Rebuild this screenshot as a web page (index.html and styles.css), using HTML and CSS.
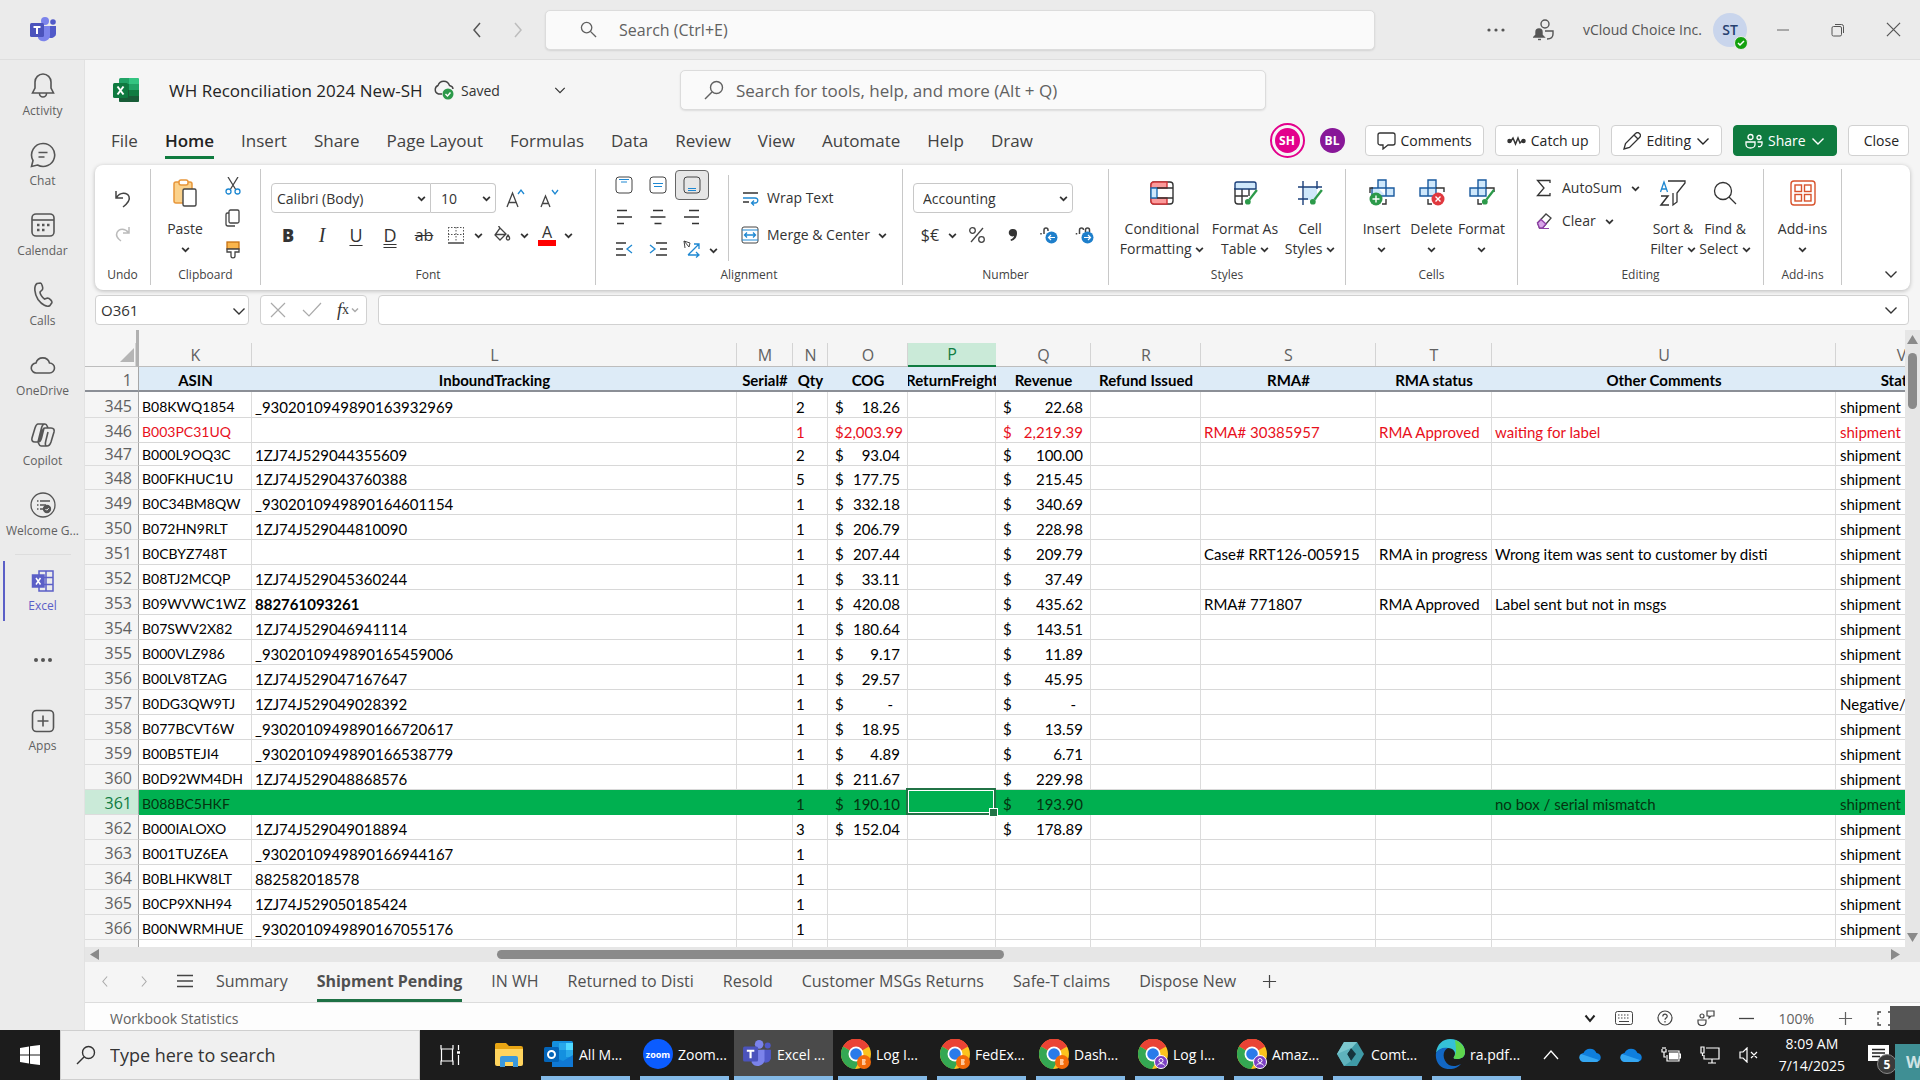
FILE: index.html
```html
<!DOCTYPE html>
<html lang="en">
<head>
<meta charset="utf-8">
<title>WH Reconciliation 2024 New-SH</title>
<link rel="stylesheet" href="styles.css">
</head>
<body>
<svg class="defs" aria-hidden="true">
  <symbol id="caret" viewBox="0 0 8 8"><path d="M1 2.5 4 5.5 7 2.5" fill="none" stroke="currentColor" stroke-width="1.5"/></symbol>
  <symbol id="chev" viewBox="0 0 14 14"><path d="M1.500 4.500 7 10 12.500 4.500" fill="none" stroke="currentColor" stroke-width="1.400"/></symbol>
  <symbol id="left" viewBox="0 0 14 18"><path d="M10 2 4 9 10 16" fill="none" stroke="currentColor" stroke-width="1.500"/></symbol>
  <symbol id="right" viewBox="0 0 14 18"><path d="M4 2 10 9 4 16" fill="none" stroke="currentColor" stroke-width="1.500"/></symbol>
  <symbol id="x" viewBox="0 0 16 16"><path d="M1 1 15 15M15 1 1 15" fill="none" stroke="currentColor" stroke-width="1.300"/></symbol>
  <symbol id="mag" viewBox="0 0 18 18"><circle cx="7" cy="7" r="5.500" fill="none" stroke="currentColor" stroke-width="1.400"/><path d="M11 11 17 17" stroke="currentColor" stroke-width="1.400"/></symbol>
  <symbol id="magl" viewBox="0 0 20 20"><circle cx="12.500" cy="7.500" r="6" fill="none" stroke="currentColor" stroke-width="1.400"/><path d="M8 12 1 19" stroke="currentColor" stroke-width="1.400"/></symbol>
  <symbol id="plus" viewBox="0 0 16 16"><path d="M8 1V15M1 8H15" stroke="currentColor" stroke-width="1.300"/></symbol>
  <symbol id="chrome" viewBox="0 0 30 30"><circle cx="15" cy="15" r="15" fill="#fcc31e"/><path d="M15 15 2 7.500A15 15 0 0 1 28 7.500Z" fill="#ea4335"/><path d="M15 15 2 7.500A15 15 0 0 0 14 30L21 18Z" fill="#34a853"/><path d="M2 7.500A15 15 0 0 1 28 7.500H15Z" fill="#ea4335"/><circle cx="15" cy="15" r="7.500" fill="#fff"/><circle cx="15" cy="15" r="5.800" fill="#2a7bea"/></symbol>
  <symbol id="orange" viewBox="0 0 14 14"><circle cx="7" cy="7" r="7" fill="#f26a0a"/><path d="M5 4h3l1 1-1 2 1 2-1 1H5Z" fill="#ffc79a"/></symbol>
  <symbol id="person" viewBox="0 0 14 14"><circle cx="7" cy="7" r="6.500" fill="#7b3fc4" stroke="#fff"/><circle cx="7" cy="5.500" r="2" fill="none" stroke="#fff"/><path d="M3.500 10.500C4 8 10 8 10.500 10.500" fill="none" stroke="#fff"/></symbol>
  <symbol id="teams" viewBox="0 0 28 28"><circle cx="16" cy="5" r="4" fill="#7b83eb"/><circle cx="24" cy="6" r="2.800" fill="#5059c9"/><path d="M19 10h8v8a5 5 0 0 1-8 3Z" fill="#5059c9"/><path d="M9 10h12v10a6.500 6.500 0 0 1-12 2Z" fill="#7b83eb"/><rect x="1" y="7" width="14" height="14" rx="1.500" fill="#4b53bc"/><path d="M4.500 11h7M8 11v7" stroke="#fff" stroke-width="2"/></symbol>
  <symbol id="brush" viewBox="0 0 14 16"><path d="M13 1 6 10" stroke="#2c9a4a" stroke-width="2.200"/><circle cx="4.500" cy="12" r="2.700" fill="#2c9a4a"/></symbol>
  <symbol id="cloud" viewBox="0 0 22 16"><path d="M5 15a4.500 4.500 0 0 1-.5-8.900A7 7 0 0 1 17.500 6 4.500 4.500 0 0 1 17 15Z" fill="#0f7fdd"/><path d="M5 15a4.500 4.500 0 0 1-3-8L20 13a4 4 0 0 1-3 2Z" fill="#35a7f2"/></symbol>
</svg>

<div class="window">
<header class="titlebar">
  <div class="brand"><svg width="28" height="28"><use href="#teams"/></svg></div>
  <nav class="history">
    <button aria-label="Back"><svg width="14" height="18"><use href="#left"/></svg></button>
    <button class="dim" aria-label="Forward"><svg width="14" height="18"><use href="#right"/></svg></button>
  </nav>
  <label class="search main-search"><svg width="17" height="17"><use href="#mag"/></svg><input type="text" placeholder="Search (Ctrl+E)" aria-label="Search"></label>
  <div class="account">
    <button aria-label="More"><svg width="18" height="4" viewBox="0 0 18 4"><g fill="#555"><circle cx="2" cy="2" r="1.600"/><circle cx="9" cy="2" r="1.600"/><circle cx="16" cy="2" r="1.600"/></g></svg></button>
    <button aria-label="Presence"><svg width="22" height="22" viewBox="0 0 22 22" fill="none" stroke="#555" stroke-width="1.400"><circle cx="12" cy="5" r="4"/><path d="M12 12h8v3c0 3-2 5-6 5"/><path d="M1 18h10l-2-2v-3a3 3 0 0 0-6 0v3Z" fill="#555"/><path d="M5 20.500h3"/></svg></button>
    <span class="org">vCloud Choice Inc.</span>
    <span class="avatar">ST<svg class="presence" width="14" height="14" viewBox="0 0 14 14"><circle cx="7" cy="7" r="6.500" fill="#13a10e" stroke="#ebebeb"/><path d="M4 7l2 2 4-4" fill="none" stroke="#fff" stroke-width="1.500"/></svg></span>
  </div>
  <div class="winctl">
    <button aria-label="Minimize"><svg width="14" height="14" viewBox="0 0 14 14"><path d="M1 7h12" stroke="#666"/></svg></button>
    <button aria-label="Restore"><svg width="14" height="14" viewBox="0 0 14 14" fill="none" stroke="#555"><rect x="1" y="3.500" width="9.500" height="9.500" rx="1.500"/><path d="M4 1.500h6.500a2 2 0 0 1 2 2V10"/></svg></button>
    <button aria-label="Close window"><svg width="15" height="15"><use href="#x"/></svg></button>
  </div>
</header>

<div class="body">
<nav class="rail">
  <a href="#"><svg width="26" height="26" viewBox="0 0 26 26" fill="none" stroke="#555" stroke-width="1.600"><path d="M13 2a8 8 0 0 0-8 8v6l-2.500 5h21L21 16v-6a8 8 0 0 0-8-8ZM9.500 21.500a3.500 3.500 0 0 0 7 0"/></svg>Activity</a>
  <a href="#"><svg width="26" height="26" viewBox="0 0 26 26" fill="none" stroke="#555" stroke-width="1.600"><path d="M13 1.500A11.500 11.500 0 1 1 7.500 23L1.500 24.500 3 18.500A11.500 11.500 0 0 1 13 1.500ZM8.500 10.500h9M8.500 15h6"/></svg>Chat</a>
  <a href="#"><svg width="26" height="26" viewBox="0 0 26 26" fill="none" stroke="#555" stroke-width="1.600"><rect x="2" y="2" width="22" height="22" rx="4"/><path d="M2 8h22"/><path d="M7 13h2.500M12 13h2.500M17 13h2.500M7 18h2.500M12 18h2.500" stroke-width="2.500"/></svg>Calendar</a>
  <a href="#"><svg width="26" height="26" viewBox="0 0 26 26" fill="none" stroke="#555" stroke-width="1.600"><path d="M7 1.500 10.500 1c1 0 3 5 2 6.500L10 10c0 2 2 5.500 4.500 7l3-1c2 0 5 3.500 4.500 4.500l-2 3c-3 2-8-.5-12-6C4.500 12 3.500 4 7 1.500Z"/></svg>Calls</a>
  <a href="#"><svg width="26" height="26" viewBox="0 0 26 26" fill="none" stroke="#555" stroke-width="1.600"><path d="M6.500 21a5 5 0 0 1-.5-10A7 7 0 0 1 19.500 11a5 5 0 0 1 0 10Z"/></svg>OneDrive</a>
  <a href="#"><svg width="26" height="26" viewBox="0 0 26 26" fill="none" stroke="#555" stroke-width="1.600"><path d="M8 2h7c2 0 2 2 3 4h3c3 0 3.500 2 3 4l-3 10c-1 3-2 4-4 4h-6c-2 0-2-2-3-4H5c-3 0-3.500-2-3-4L5 6c1-3 1.500-4 3-4ZM15 2c-2 0-3 2-3.500 4L8 20M18 6h-3c-2 0-2.500 2-3 4L9 20M8 20c2 0 3-2 3.500-4L14 6M17 24c-2 0-2-2-1-6l2-8"/></svg>Copilot</a>
  <a href="#"><svg width="26" height="26" viewBox="0 0 26 26" fill="none" stroke="#555" stroke-width="1.300"><circle cx="13" cy="13" r="12"/><path d="M10 9h10M10 13h6M10 17h3M7 9h1.500M7 13h1.500M7 17h1.500"/><circle cx="17" cy="17" r="3.500" fill="#555"/><path d="m15.500 17 1.200 1.200 2-2" stroke="#fff" stroke-width="1"/></svg>Welcome G...</a>
  <hr>
  <a href="#" class="current"><svg width="24" height="24" viewBox="0 0 24 24" fill="none" stroke="#5b5fc7" stroke-width="1.500"><path d="M8 2h14v20H8ZM15 2v20M8 8.500h14M8 15.500h14"/><rect x="1.500" y="6" width="11.500" height="12" fill="#5b5fc7"/><path d="m5 9 4.500 6.500M9.500 9 5 15.500" stroke="#fff"/></svg>Excel</a>
  <a href="#" class="more" aria-label="More apps"><svg width="20" height="6" viewBox="0 0 20 6" fill="#555"><circle cx="3" cy="3" r="2"/><circle cx="10" cy="3" r="2"/><circle cx="17" cy="3" r="2"/></svg></a>
  <a href="#"><svg width="24" height="24" viewBox="0 0 24 24" fill="none" stroke="#555" stroke-width="1.600"><rect x="1.500" y="1.500" width="21" height="21" rx="4"/><path d="M12 6.500v11M6.500 12h11"/></svg>Apps</a>
</nav>

<main class="app">
  <div class="docbar">
    <svg class="xl" width="26" height="24" viewBox="0 0 26 24"><rect x="6" y="0" width="20" height="24" rx="1.500" fill="#21a366"/><path d="M16 0h8.500A1.500 1.500 0 0 1 26 1.500V6H16Z" fill="#33c481"/><path d="M6 6h10v6H6Z" fill="#107c41"/><path d="M6 12h20v10.500a1.500 1.500 0 0 1-1.500 1.500h-17A1.500 1.500 0 0 1 6 22.500Z" fill="#185c37"/><path d="M16 12h10v6H16Z" fill="#107c41"/><rect x="0" y="5" width="15" height="15" rx="1.500" fill="#0f7a40"/><path d="m4.500 8.500 6 8M10.500 8.500l-6 8" stroke="#fff" stroke-width="2"/></svg>
    <h1>WH Reconciliation 2024 New-SH</h1>
    <svg class="saved-ic" width="22" height="20" viewBox="0 0 22 20"><path d="M9 14H5.500a4.500 4.500 0 0 1-.5-8.500 6 6 0 0 1 11.500 0c2 .5 3.500 1.500 3.500 3.500" fill="none" stroke="#444" stroke-width="1.400"/><circle cx="15" cy="14" r="5.500" fill="#2c9a4a"/><path d="m12.500 14 2 2 3-3.500" fill="none" stroke="#fff" stroke-width="1.400"/></svg>
    <span class="saved">Saved</span>
    <button class="doc-menu" aria-label="File menu"><svg width="12" height="12"><use href="#chev"/></svg></button>
    <label class="search tool-search"><svg width="20" height="20"><use href="#magl"/></svg><input type="text" placeholder="Search for tools, help, and more (Alt + Q)" aria-label="Search for tools"></label>
  </div>

  <div class="menubar">
    <nav class="menus">
      <a href="#">File</a><a href="#" class="on">Home</a><a href="#">Insert</a><a href="#">Share</a><a href="#">Page Layout</a><a href="#">Formulas</a><a href="#">Data</a><a href="#">Review</a><a href="#">View</a><a href="#">Automate</a><a href="#">Help</a><a href="#">Draw</a>
    </nav>
    <div class="people"><span class="face pink">SH</span><span class="face purple">BL</span></div>
    <div class="actions">
      <button><svg width="19" height="18" viewBox="0 0 19 18" fill="none" stroke="#333" stroke-width="1.300"><path d="M3 1h13a2 2 0 0 1 2 2v8a2 2 0 0 1-2 2h-5l-5 4v-4H3a2 2 0 0 1-2-2V3a2 2 0 0 1 2-2Z"/></svg>Comments</button>
      <button><svg width="19" height="12" viewBox="0 0 19 12" fill="none" stroke="#333" stroke-width="1.500"><path d="M2 6h2l2-3 2.500 6L11 3l2 5 2-2h2"/><circle cx="2.500" cy="6" r="1.500" fill="#333"/><circle cx="16.500" cy="6" r="1.500" fill="#333"/></svg>Catch up</button>
      <button><svg width="18" height="18" viewBox="0 0 18 18" fill="none" stroke="#333" stroke-width="1.300"><path d="M1 17 2.500 11.500 12.500 1.500a2.500 2.500 0 0 1 4 4L6.500 15.500ZM11 3l4 4"/></svg>Editing<svg width="14" height="14"><use href="#chev"/></svg></button>
      <button class="share"><svg width="18" height="16" viewBox="0 0 18 16" fill="none" stroke="#fff" stroke-width="1.300"><circle cx="5.500" cy="4" r="2.500"/><circle cx="14" cy="4.500" r="2"/><path d="M1 9h9v2.500c0 2-2 3.500-4.500 3.500S1 13.500 1 11.500ZM12.500 9H17v2c0 2-2 3-4 2.500"/></svg>Share<svg width="14" height="14"><use href="#chev"/></svg></button>
      <button class="close">Close</button>
    </div>
  </div>

  <section class="ribbon">
    <div class="group g-undo"><div class="gbody stack">
      <button aria-label="Undo"><svg width="18" height="20" viewBox="0 0 18 20" fill="none" stroke="#444" stroke-width="1.500"><path d="M2 2v7h7M2.500 8.500C6 3 13 3 15 7.500c1.500 4-1.500 7-6 10.500"/></svg></button>
      <button aria-label="Redo"><svg width="18" height="20" viewBox="0 0 18 20" fill="none" stroke="#bbb" stroke-width="1.500"><path d="M15 3v6H9M14.500 8.500C11 4 5 4 3 8.500c-1.500 3.500.5 6 4 8.500"/></svg></button>
    </div><span class="glabel">Undo</span></div>

    <div class="group g-clip"><div class="gbody">
      <button class="big paste"><svg width="28" height="28" viewBox="0 0 28 28"><path d="M5 3h14a2 2 0 0 1 2 2v19H5a2 2 0 0 1-2-2V5a2 2 0 0 1 2-2Z" fill="#fbd28c" stroke="#e8963a" stroke-width="1.500"/><rect x="8" y="1" width="9" height="5" rx="2" fill="#fff" stroke="#e8963a" stroke-width="1.500"/><rect x="12" y="10" width="13" height="17" rx="1.500" fill="#fff" stroke="#444" stroke-width="1.400"/></svg>Paste<svg width="9" height="9"><use href="#caret"/></svg></button>
      <div class="minis">
        <button aria-label="Cut"><svg width="18" height="18" viewBox="0 0 18 18" fill="none" stroke-width="1.300"><path d="M4 0 12 13M14 0 6 13" stroke="#444"/><circle cx="4.500" cy="14.500" r="2.500" stroke="#1e88d2"/><circle cx="13.500" cy="14.500" r="2.500" stroke="#1e88d2"/></svg></button>
        <button aria-label="Copy"><svg width="18" height="18" viewBox="0 0 18 18" fill="none" stroke="#444" stroke-width="1.300"><rect x="5" y="1" width="10" height="13" rx="1.500"/><path d="M5 4H3.500A1.500 1.500 0 0 0 2 5.500V15a2 2 0 0 0 2 2h7"/></svg></button>
        <button aria-label="Format painter"><svg width="18" height="18" viewBox="0 0 18 18"><rect x="3" y="1" width="12" height="7" fill="#f9b54c" stroke="#c77213" stroke-width="1.300"/><path d="M3 8h12v3h-4v4c0 2.500-4 2.500-4 0v-4H3Z" fill="#fff" stroke="#444" stroke-width="1.300"/></svg></button>
      </div>
    </div><span class="glabel">Clipboard</span></div>

    <div class="group g-font"><div class="gbody rows">
      <div class="row">
        <span class="combo c-font"><select aria-label="Font"><option>Calibri (Body)</option></select><svg width="9" height="9"><use href="#caret"/></svg></span><span class="combo c-size"><select aria-label="Font size"><option>10</option></select><svg width="9" height="9"><use href="#caret"/></svg></span>
        <button class="grow" aria-label="Increase font size"><svg width="20" height="20" viewBox="0 0 20 20" fill="none" stroke="#444" stroke-width="1.300"><path d="M1 19 6.500 5 12 19M3 14.500h7"/><path d="M12 6l3-4 3 4" stroke="#1e88d2"/></svg></button>
        <button class="grow" aria-label="Decrease font size"><svg width="20" height="20" viewBox="0 0 20 20" fill="none" stroke="#444" stroke-width="1.300"><path d="M1 19 5.500 8 10 19M3 15.500h5"/><path d="M12 2l3 4 3-4" stroke="#1e88d2"/></svg></button>
      </div>
      <div class="row fmt">
        <button class="b">B</button><button class="i">I</button><button class="u">U</button><button class="d">D</button><button class="s">ab</button>
        <button aria-label="Borders"><svg width="18" height="18" viewBox="0 0 18 18"><path d="M1 1.500h16M1.500 1v14M16.500 1v14M9 1v14M1 8.500h16" stroke="#555" stroke-dasharray="1.500 1.500"/><path d="M1 17h16" stroke="#444" stroke-width="1.500"/></svg></button><svg class="dd" width="9" height="9"><use href="#caret"/></svg>
        <button aria-label="Fill colour"><svg width="18" height="18" viewBox="0 0 18 18" fill="none" stroke="#444" stroke-width="1.300"><path d="M7 2 13 8 7 14 2 9ZM7 2 5.500 0M2.500 8.500h10"/><path d="M15 9c3 4 1 5 0 5s-3-1 0-5Z"/></svg></button><svg class="dd" width="9" height="9"><use href="#caret"/></svg>
        <button class="a">A</button><svg class="dd" width="9" height="9"><use href="#caret"/></svg>
      </div>
    </div><span class="glabel">Font</span></div>

    <div class="group g-align"><div class="gbody">
      <div class="agrid">
        <button aria-label="Top align"><svg width="18" height="18" viewBox="0 0 18 18" fill="none"><rect x="1" y="1" width="16" height="16" rx="3" stroke="#444"/><path d="M4 3.500h10M6 6h6" stroke="#1e88d2"/></svg></button>
        <button aria-label="Middle align"><svg width="18" height="18" viewBox="0 0 18 18" fill="none"><rect x="1" y="1" width="16" height="16" rx="3" stroke="#444"/><path d="M4 7.500h10M5 10.500h8" stroke="#1e88d2"/></svg></button>
        <button class="pressed" aria-label="Bottom align"><svg width="18" height="18" viewBox="0 0 18 18" fill="none"><rect x="1" y="1" width="16" height="16" rx="3" stroke="#444"/><path d="M5 12.500h8M5 14.500h8" stroke="#1e88d2"/></svg></button>
        <button aria-label="Align left"><svg width="18" height="18" viewBox="0 0 18 18"><path d="M2 2.500h10M2 9h15M2 15.500h7" stroke="#333" stroke-width="1.300"/></svg></button>
        <button aria-label="Centre"><svg width="18" height="18" viewBox="0 0 18 18"><path d="M4 2.500h10M1.500 9h15M5.500 15.500h7" stroke="#333" stroke-width="1.300"/></svg></button>
        <button aria-label="Align right"><svg width="18" height="18" viewBox="0 0 18 18"><path d="M6 2.500h10M1 9h15M9 15.500h7" stroke="#333" stroke-width="1.300"/></svg></button>
        <button aria-label="Decrease indent"><svg width="18" height="18" viewBox="0 0 18 18" fill="none"><path d="M1 3h10M1 9h7M1 15h10" stroke="#333" stroke-width="1.300"/><path d="M17 5l-5 4 5 4" stroke="#1e88d2" stroke-width="1.300"/></svg></button>
        <button aria-label="Increase indent"><svg width="18" height="18" viewBox="0 0 18 18" fill="none"><path d="M7 3h11M11 9h7M7 15h11" stroke="#333" stroke-width="1.300"/><path d="M1 5l5 4-5 4" stroke="#1e88d2" stroke-width="1.300"/></svg></button>
        <button class="orient" aria-label="Orientation"><svg width="18" height="18" viewBox="0 0 18 18" fill="none"><path d="M1 1l5 6 1-4ZM1 1l1 7" stroke="#444"/><path d="M5 15 16 4M11 4h5v5M5 15h11M13 12l3 3-3 2.500" stroke="#1e88d2" stroke-width="1.300"/></svg></button>
      </div>
      <svg class="orient-dd" width="9" height="9"><use href="#caret"/></svg>
      <div class="arows">
        <button><svg width="18" height="18" viewBox="0 0 18 18" fill="none"><path d="M2 4h15M2 13h6" stroke="#333" stroke-width="1.300"/><path d="M2 9h12c4 0 3.500 5 0 5h-3M13 11.500 10.500 14l2.500 2.500" stroke="#1e88d2" stroke-width="1.300"/></svg>Wrap Text</button>
        <button><svg width="18" height="18" viewBox="0 0 18 18" fill="none"><rect x="1" y="1" width="16" height="16" rx="2" stroke="#444"/><path d="M1 4h16M1 14h16" stroke="#1e88d2"/><path d="M4 9h10M6 6.500 3.500 9 6 11.500M12 6.500 14.500 9 12 11.500" stroke="#1e88d2" stroke-width="1.300"/></svg>Merge &amp; Center<svg width="9" height="9"><use href="#caret"/></svg></button>
      </div>
    </div><span class="glabel">Alignment</span></div>

    <div class="group g-num"><div class="gbody rows">
      <div class="row"><span class="combo c-num"><select aria-label="Number format"><option>Accounting</option></select><svg width="9" height="9"><use href="#caret"/></svg></span></div>
      <div class="row nums">
        <button class="cur">$€</button><svg class="dd" width="9" height="9"><use href="#caret"/></svg>
        <button aria-label="Percent"><svg width="18" height="18" viewBox="0 0 18 18" fill="none" stroke="#444" stroke-width="1.300"><circle cx="4.500" cy="4.500" r="2.800"/><circle cx="13.500" cy="13.500" r="2.800"/><path d="M15 2 3 16"/></svg></button>
        <button aria-label="Comma style"><svg width="18" height="18" viewBox="0 0 18 18"><path d="M9 3a4 4 0 0 1 4 4c0 4-2 7-6 8l-.5-1.500C9 12.500 10 11 10 10a3.700 3.700 0 1 1-1-7Z" fill="#333"/></svg></button>
        <button aria-label="Decrease decimal"><svg width="20" height="18" viewBox="0 0 20 18" fill="none"><path d="M2 7v1.500M5 8V4a2 2 0 0 1 4 0v1" stroke="#444" stroke-width="1.500"/><circle cx="12.500" cy="11.500" r="6" fill="#1e7fcb"/><path d="M16 11.500H9.500M12 9l-2.500 2.500L12 14" stroke="#fff" stroke-width="1.200"/></svg></button>
        <button aria-label="Increase decimal"><svg width="20" height="18" viewBox="0 0 20 18" fill="none"><path d="M1.500 7v1.500M4.500 8V4a2 2 0 0 1 4 0M10.500 6V4a2 2 0 0 1 4 0v2" stroke="#444" stroke-width="1.500"/><circle cx="12.500" cy="11.500" r="6" fill="#1e7fcb"/><path d="M9 11.500h6.500M13 9l2.500 2.500L13 14" stroke="#fff" stroke-width="1.200"/></svg></button>
      </div>
    </div><span class="glabel">Number</span></div>

    <div class="group g-style"><div class="gbody bigs">
      <button class="big w90"><svg width="28" height="28" viewBox="0 0 28 28"><rect x="3" y="3" width="22" height="22" rx="3" fill="#fff" stroke="#333" stroke-width="1.400"/><path d="M6 3h13v6H3V6a3 3 0 0 1 3-3ZM3 19h16v6H6a3 3 0 0 1-3-3Z" fill="#fb9a9a" stroke="#d13438" stroke-width="1.400"/><path d="M3 9h6v10H3Z" fill="#cfe8fb" stroke="#1e6fb5" stroke-width="1.400"/><path d="M19 9h6M19 19h6M9 9h10M9 19h10" stroke="#333" stroke-width="1.400"/></svg><span>Conditional</span><span>Formatting <svg width="9" height="9"><use href="#caret"/></svg></span></button>
      <button class="big w72"><svg width="28" height="28" viewBox="0 0 28 28"><path d="M4 9v13a3 3 0 0 0 3 3h5M4 17h13M11 9v16M18 9v8" fill="none" stroke="#333" stroke-width="1.400"/><path d="M6 3h17a2 2 0 0 1 2 2v5H4V5a2 2 0 0 1 2-2Z" fill="#cfe8fb" stroke="#1a3f7a" stroke-width="1.400"/><use href="#brush" x="12" y="10" width="15" height="17"/></svg><span>Format As</span><span>Table <svg width="9" height="9"><use href="#caret"/></svg></span></button>
      <button class="big w54"><svg width="28" height="28" viewBox="0 0 28 28"><path d="M8 8h13v13H8Z" fill="#cfe8fb"/><path d="M2 8h24M2 20h10M7 2v24M21 2v8" stroke="#1a3f7a" stroke-width="1.400"/><use href="#brush" x="12" y="10" width="15" height="17"/></svg><span>Cell</span><span>Styles <svg width="9" height="9"><use href="#caret"/></svg></span></button>
    </div><span class="glabel">Styles</span></div>

    <div class="group g-cells"><div class="gbody bigs">
      <button class="big w50"><svg width="28" height="28" viewBox="0 0 28 28"><path d="M10 1h8v8h8v8h-8v-8h-8Z M10 9H4v8h14" fill="#cfe8fb" stroke="#1a5a9e" stroke-width="1.400"/><path d="M18 20v5h-4M2 14V9h3" fill="none" stroke="#333" stroke-width="1.400"/><circle cx="8" cy="20" r="6.500" fill="#2c9a4a"/><path d="M8 16.500v7M4.500 20h7" stroke="#fff" stroke-width="1.400"/></svg><span>Insert</span><svg width="9" height="9"><use href="#caret"/></svg></button>
      <button class="big w50"><svg width="28" height="28" viewBox="0 0 28 28"><path d="M10 1h8v8h-8ZM2 9h16v8H2ZM10 9v8" fill="#cfe8fb" stroke="#1a5a9e" stroke-width="1.400"/><path d="M18 9h8v4M10 20v5h4" fill="none" stroke="#333" stroke-width="1.400"/><circle cx="20" cy="20" r="6.500" fill="#e0383e"/><path d="m17.500 17.500 5 5M22.500 17.500l-5 5" stroke="#fff" stroke-width="1.400"/></svg><span>Delete</span><svg width="9" height="9"><use href="#caret"/></svg></button>
      <button class="big w50"><svg width="28" height="28" viewBox="0 0 28 28"><path d="M10 1h8v8h-8ZM2 9h16v8H2ZM10 9v8" fill="#cfe8fb" stroke="#1a5a9e" stroke-width="1.400"/><path d="M18 9h8v4M10 20v5h4" fill="none" stroke="#333" stroke-width="1.400"/><use href="#brush" x="12" y="10" width="15" height="17"/></svg><span>Format</span><svg width="9" height="9"><use href="#caret"/></svg></button>
    </div><span class="glabel">Cells</span></div>

    <div class="group g-edit"><div class="gbody">
      <div class="erows">
        <button><svg width="18" height="18" viewBox="0 0 18 18"><path d="M15 4V1.500H2.500L9 9l-6.500 7.500H15V14" fill="none" stroke="#333" stroke-width="1.300"/></svg>AutoSum<svg class="far" width="9" height="9"><use href="#caret"/></svg></button>
        <button><svg width="18" height="18" viewBox="0 0 18 18" fill="none"><path d="M2.500 11 11 2l5 4-8.500 10h-3Z" stroke="#444" stroke-width="1.300"/><path d="M2.500 11 6 7.500l5 4.500-3.500 4h-3Z" fill="#d8a6e8" stroke="#8f3fa8" stroke-width="1.300"/><path d="M7 16.500h7" stroke="#8f3fa8"/></svg>Clear<svg width="9" height="9"><use href="#caret"/></svg></button>
      </div>
      <button class="big w50"><svg width="28" height="28" viewBox="0 0 28 28" fill="none"><path d="M9 2h17v2l-8 10v9l-4 3V14" stroke="#333" stroke-width="1.300"/><path d="M1.500 13 5 3l3.500 10M3 10h4.500" stroke="#1e88d2" stroke-width="1.300"/><path d="M2 17h7l-7 9h8" stroke="#333" stroke-width="1.500"/></svg><span>Sort &amp;</span><span>Filter <svg width="9" height="9"><use href="#caret"/></svg></span></button>
      <button class="big w54"><svg width="28" height="28" viewBox="0 0 28 28" fill="none" stroke="#333" stroke-width="1.300"><circle cx="12" cy="12" r="8.500"/><path d="M18 18l7 7"/></svg><span>Find &amp;</span><span>Select <svg width="9" height="9"><use href="#caret"/></svg></span></button>
    </div><span class="glabel">Editing</span></div>

    <div class="group g-add"><div class="gbody bigs">
      <button class="big w60"><svg width="28" height="28" viewBox="0 0 28 28" fill="none" stroke="#d8532c" stroke-width="1.400"><rect x="2" y="2" width="24" height="24" rx="3"/><rect x="6" y="6" width="6.500" height="6.500"/><rect x="15.500" y="6" width="6.500" height="6.500"/><rect x="6" y="15.500" width="6.500" height="6.500"/><rect x="15.500" y="15.500" width="6.500" height="6.500"/></svg><span>Add-ins</span><svg width="9" height="9"><use href="#caret"/></svg></button>
    </div><span class="glabel">Add-ins</span></div>
    <button class="expand" aria-label="Ribbon options"><svg width="14" height="14"><use href="#chev"/></svg></button>
  </section>

  <div class="fbar">
    <span class="combo c-name"><select aria-label="Name box"><option>O361</option></select><svg width="14" height="14"><use href="#chev"/></svg></span>
    <div class="fx">
      <svg width="18" height="16" viewBox="0 0 18 16"><path d="M2 1 16 15M16 1 2 15" stroke="#aaa" stroke-width="1.200"/></svg>
      <svg width="20" height="16" viewBox="0 0 20 16"><path d="M1 8l6 6L19 1" fill="none" stroke="#aaa" stroke-width="1.200"/></svg>
      <button aria-label="Insert function"><em>f</em><sub>x</sub></button>
      <svg class="dimdd" width="8" height="8"><use href="#caret"/></svg>
    </div>
    <label class="formula"><input type="text" aria-label="Formula"><svg width="14" height="14"><use href="#chev"/></svg></label>
  </div>

  <div class="sheet">
    <div class="view">
<table>
<colgroup><col class="c0"><col class="cK"><col class="cL"><col class="cM"><col class="cN"><col class="cO"><col class="cP"><col class="cQ"><col class="cR"><col class="cS"><col class="cT"><col class="cU"><col class="cV"></colgroup>
<thead>
<tr class="letters"><th class="corner"><svg width="14" height="14" viewBox="0 0 14 14"><path d="M14 0v14H0Z" fill="#b5b5b5"/></svg></th><th>K</th><th>L</th><th>M</th><th>N</th><th>O</th><th class="sel">P</th><th>Q</th><th>R</th><th>S</th><th>T</th><th>U</th><th>V</th></tr>
<tr class="names"><th class="n">1</th><th>ASIN</th><th>InboundTracking</th><th>Serial#</th><th>Qty</th><th>COG</th><th><div class="clip"><span>ReturnFreight</span></div></th><th>Revenue</th><th>Refund Issued</th><th>RMA#</th><th>RMA status</th><th>Other Comments</th><th>Status</th></tr>
</thead>
<tbody>
<tr class="h26"><th>345</th><td>B08KWQ1854</td><td>_9302010949890163932969</td><td></td><td>2</td><td class="m"><span>$</span>18.26</td><td></td><td class="m"><span>$</span>22.68</td><td></td><td></td><td></td><td></td><td>shipment</td></tr>
<tr class="red"><th>346</th><td>B003PC31UQ</td><td></td><td></td><td>1</td><td class="m">$2,003.99</td><td></td><td class="m"><span>$</span>2,219.39</td><td></td><td>RMA# 30385957</td><td>RMA Approved</td><td>waiting for label</td><td>shipment</td></tr>
<tr class="h23"><th>347</th><td>B000L9OQ3C</td><td>1ZJ74J529044355609</td><td></td><td>2</td><td class="m"><span>$</span>93.04</td><td></td><td class="m"><span>$</span>100.00</td><td></td><td></td><td></td><td></td><td>shipment</td></tr>
<tr class="h24"><th>348</th><td>B00FKHUC1U</td><td>1ZJ74J529043760388</td><td></td><td>5</td><td class="m"><span>$</span>177.75</td><td></td><td class="m"><span>$</span>215.45</td><td></td><td></td><td></td><td></td><td>shipment</td></tr>
<tr><th>349</th><td>B0C34BM8QW</td><td>_9302010949890164601154</td><td></td><td>1</td><td class="m"><span>$</span>332.18</td><td></td><td class="m"><span>$</span>340.69</td><td></td><td></td><td></td><td></td><td>shipment</td></tr>
<tr><th>350</th><td>B072HN9RLT</td><td>1ZJ74J529044810090</td><td></td><td>1</td><td class="m"><span>$</span>206.79</td><td></td><td class="m"><span>$</span>228.98</td><td></td><td></td><td></td><td></td><td>shipment</td></tr>
<tr><th>351</th><td>B0CBYZ748T</td><td></td><td></td><td>1</td><td class="m"><span>$</span>207.44</td><td></td><td class="m"><span>$</span>209.79</td><td></td><td>Case# RRT126-005915</td><td>RMA in progress</td><td>Wrong item was sent to customer by disti</td><td>shipment</td></tr>
<tr><th>352</th><td>B08TJ2MCQP</td><td>1ZJ74J529045360244</td><td></td><td>1</td><td class="m"><span>$</span>33.11</td><td></td><td class="m"><span>$</span>37.49</td><td></td><td></td><td></td><td></td><td>shipment</td></tr>
<tr><th>353</th><td>B09WVWC1WZ</td><td><b>882761093261</b></td><td></td><td>1</td><td class="m"><span>$</span>420.08</td><td></td><td class="m"><span>$</span>435.62</td><td></td><td>RMA# 771807</td><td>RMA Approved</td><td>Label sent but not in msgs</td><td>shipment</td></tr>
<tr><th>354</th><td>B07SWV2X82</td><td>1ZJ74J529046941114</td><td></td><td>1</td><td class="m"><span>$</span>180.64</td><td></td><td class="m"><span>$</span>143.51</td><td></td><td></td><td></td><td></td><td>shipment</td></tr>
<tr><th>355</th><td>B000VLZ986</td><td>_9302010949890165459006</td><td></td><td>1</td><td class="m"><span>$</span>9.17</td><td></td><td class="m"><span>$</span>11.89</td><td></td><td></td><td></td><td></td><td>shipment</td></tr>
<tr><th>356</th><td>B00LV8TZAG</td><td>1ZJ74J529047167647</td><td></td><td>1</td><td class="m"><span>$</span>29.57</td><td></td><td class="m"><span>$</span>45.95</td><td></td><td></td><td></td><td></td><td>shipment</td></tr>
<tr><th>357</th><td>B0DG3QW9TJ</td><td>1ZJ74J529049028392</td><td></td><td>1</td><td class="m dash"><span>$</span>-</td><td></td><td class="m dash"><span>$</span>-</td><td></td><td></td><td></td><td></td><td>Negative/</td></tr>
<tr><th>358</th><td>B077BCVT6W</td><td>_9302010949890166720617</td><td></td><td>1</td><td class="m"><span>$</span>18.95</td><td></td><td class="m"><span>$</span>13.59</td><td></td><td></td><td></td><td></td><td>shipment</td></tr>
<tr><th>359</th><td>B00B5TEJI4</td><td>_9302010949890166538779</td><td></td><td>1</td><td class="m"><span>$</span>4.89</td><td></td><td class="m"><span>$</span>6.71</td><td></td><td></td><td></td><td></td><td>shipment</td></tr>
<tr><th>360</th><td>B0D92WM4DH</td><td>1ZJ74J529048868576</td><td></td><td>1</td><td class="m"><span>$</span>211.67</td><td></td><td class="m"><span>$</span>229.98</td><td></td><td></td><td></td><td></td><td>shipment</td></tr>
<tr class="green"><th>361</th><td>B088BC5HKF</td><td></td><td></td><td>1</td><td class="m"><span>$</span>190.10</td><td class="active"><i></i></td><td class="m"><span>$</span>193.90</td><td></td><td></td><td></td><td>no box / serial mismatch</td><td>shipment</td></tr>
<tr><th>362</th><td>B000IALOXO</td><td>1ZJ74J529049018894</td><td></td><td>3</td><td class="m"><span>$</span>152.04</td><td></td><td class="m"><span>$</span>178.89</td><td></td><td></td><td></td><td></td><td>shipment</td></tr>
<tr><th>363</th><td>B001TUZ6EA</td><td>_9302010949890166944167</td><td></td><td>1</td><td></td><td></td><td></td><td></td><td></td><td></td><td></td><td>shipment</td></tr>
<tr><th>364</th><td>B0BLHKW8LT</td><td>882582018578</td><td></td><td>1</td><td></td><td></td><td></td><td></td><td></td><td></td><td></td><td>shipment</td></tr>
<tr><th>365</th><td>B0CP9XNH94</td><td>1ZJ74J529050185424</td><td></td><td>1</td><td></td><td></td><td></td><td></td><td></td><td></td><td></td><td>shipment</td></tr>
<tr><th>366</th><td>B00NWRMHUE</td><td>_9302010949890167055176</td><td></td><td>1</td><td></td><td></td><td></td><td></td><td></td><td></td><td></td><td>shipment</td></tr>
<tr><th></th><td></td><td></td><td></td><td></td><td></td><td></td><td></td><td></td><td></td><td></td><td></td><td></td></tr>
</tbody>
</table>
    </div>
    <div class="vscroll"><svg width="11" height="9" viewBox="0 0 11 9"><path d="M5.500 0 11 9H0Z" fill="#8a8a8a"/></svg><span></span><svg width="11" height="9" viewBox="0 0 11 9"><path d="M0 0h11L5.500 9Z" fill="#8a8a8a"/></svg></div>
  </div>
  <div class="hscroll"><svg width="9" height="11" viewBox="0 0 9 11"><path d="M9 0v11L0 5.500Z" fill="#8a8a8a"/></svg><div><span></span></div><svg width="9" height="11" viewBox="0 0 9 11"><path d="M0 0v11l9-5.500Z" fill="#8a8a8a"/></svg></div>

  <nav class="tabs">
    <button class="step" aria-label="Previous sheet"><svg width="10" height="13"><use href="#left"/></svg></button>
    <button class="step" aria-label="Next sheet"><svg width="10" height="13"><use href="#right"/></svg></button>
    <button class="step all" aria-label="All sheets"><svg width="16" height="14" viewBox="0 0 16 14"><path d="M0 1.500h16M0 7h16M0 12.500h16" stroke="#444" stroke-width="1.400"/></svg></button>
    <a href="#">Summary</a><a href="#" class="on">Shipment Pending</a><a href="#">IN WH</a><a href="#">Returned to Disti</a><a href="#">Resold</a><a href="#">Customer MSGs Returns</a><a href="#">Safe-T claims</a><a href="#">Dispose New</a>
    <button class="step" aria-label="New sheet"><svg width="15" height="15"><use href="#plus"/></svg></button>
  </nav>

  <footer class="status">
    <span>Workbook Statistics</span>
    <div class="sicons">
      <svg class="more-status" width="12" height="12" viewBox="0 0 12 12"><path d="M1.500 3.500 6 9l4.500-5.500" fill="none" stroke="#222" stroke-width="2"/></svg>
      <svg width="18" height="14" viewBox="0 0 18 14" fill="none" stroke="#444"><rect x=".5" y=".5" width="17" height="13" rx="2"/><path d="M3 4h12M3 7h12" stroke-dasharray="1.500 1.500"/><path d="M4 10.500h10"/></svg>
      <svg width="16" height="16" viewBox="0 0 16 16" fill="none" stroke="#444" stroke-width="1.200"><circle cx="8" cy="8" r="7"/><path d="M5.800 6.500c0-3 4.400-3 4.400-.3 0 1.800-2.200 1.800-2.200 3.600M8 11v1.500"/></svg>
      <svg width="18" height="16" viewBox="0 0 18 16" fill="none" stroke="#444" stroke-width="1.200"><circle cx="5" cy="6" r="2"/><path d="M1 10h8v2c0 2-1.500 3.500-4 3.500S1 14 1 12ZM10 1h7v5h-3l-2 2V6h-2Z"/></svg>
      <button aria-label="Zoom out"><svg width="15" height="15" viewBox="0 0 15 15"><path d="M0 7.500h15" stroke="#444" stroke-width="1.300"/></svg></button>
      <span class="pct">100%</span>
      <button aria-label="Zoom in"><svg width="15" height="15"><use href="#plus"/></svg></button>
      <svg width="15" height="15" viewBox="0 0 15 15" fill="none" stroke="#444" stroke-width="1.300"><path d="M1 4V1h3M11 1h3v3M14 11v3h-3M4 14H1v-3M1 6.500v2M14 6.500v2"/></svg>
    </div>
  </footer>
</main>
</div>

<footer class="taskbar">
  <button class="start" aria-label="Start"><svg width="20" height="20" viewBox="0 0 20 20" fill="#fff"><path d="M0 3 9 1.500V9.500H0ZM10 1.300 20 0v9.500H10ZM0 10.500h9v8L0 17ZM10 10.500h10V20l-10-1.300Z"/></svg></button>
  <label class="tsearch"><svg width="20" height="20"><use href="#magl"/></svg><input type="text" placeholder="Type here to search" aria-label="Type here to search"></label>
  <button class="tv" aria-label="Task view"><svg width="21" height="20" viewBox="0 0 21 20" fill="none" stroke="#fff" stroke-width="1.200"><path d="M1 0v4h12V0M1 20v-4h12v4M1.500 4v12M12.500 4v12M18.500 0v5M18.500 10v10"/><path d="M17 7.500h3" stroke-width="2.500"/></svg></button>
  <button class="ex" aria-label="File Explorer"><svg width="28" height="24" viewBox="0 0 28 24"><path d="M0 1.500A1.500 1.500 0 0 1 1.500 0H11l3 3h12a2 2 0 0 1 2 2v5H0Z" fill="#e8a513"/><path d="M0 6h28v15a2 2 0 0 1-2 2H2a2 2 0 0 1-2-2Z" fill="#ffd45e"/><path d="M5 24V15a2 2 0 0 1 2-2h14a2 2 0 0 1 2 2v9h-5v-5h-8v5Z" fill="#3a98dc"/></svg></button>
  <div class="tasks">
    <button><svg width="30" height="30" viewBox="0 0 30 30"><rect x="8" y="2" width="21" height="26" rx="1.500" fill="#1490df"/><path d="M15 4h7v7h-7Z" fill="#28a8ea"/><path d="M22 4h7v7h-7Z" fill="#50d9ff"/><path d="M22 11h7v7h-7Z" fill="#28a8ea"/><path d="M8 17l11 5 10-6v12H8Z" fill="#0f78d4"/><rect x="0" y="8" width="15" height="15" rx="1.500" fill="#0364b8"/><circle cx="7.500" cy="15.500" r="3.500" fill="none" stroke="#fff" stroke-width="2"/></svg>All M...</button>
    <button><span class="zoom">zoom</span>Zoom...</button>
    <button class="on"><svg width="30" height="30"><use href="#teams"/></svg>Excel ...</button>
    <button><svg width="30" height="30" viewBox="0 0 30 30"><use href="#chrome"/><use href="#orange" x="16" y="16" width="14" height="14"/></svg>Log I...</button>
    <button><svg width="30" height="30" viewBox="0 0 30 30"><use href="#chrome"/><use href="#orange" x="16" y="16" width="14" height="14"/></svg>FedEx...</button>
    <button><svg width="30" height="30" viewBox="0 0 30 30"><use href="#chrome"/><use href="#orange" x="16" y="16" width="14" height="14"/></svg>Dash...</button>
    <button><svg width="30" height="30" viewBox="0 0 30 30"><use href="#chrome"/><use href="#person" x="16" y="16" width="14" height="14"/></svg>Log I...</button>
    <button><svg width="30" height="30" viewBox="0 0 30 30"><use href="#chrome"/><use href="#person" x="16" y="16" width="14" height="14"/></svg>Amaz...</button>
    <button><svg width="30" height="30" viewBox="0 0 30 30"><path d="M8 3h13l7 12-7 12H8L1 15Z" fill="#3f9aa6"/><path d="M8 3h13l-6 7-4 5H1Z" fill="#7cc7ce"/><path d="M15 9l5 6-5 7-4-7Z" fill="#16343c"/><path d="M15 9l-4 6 4 7-7 5-7-12Z" fill="#5fb3bd"/></svg>Comt...</button>
    <button><svg width="30" height="30" viewBox="0 0 30 30"><path d="M1 14C2 5 8 0 15 0c9 0 15 6 15 13 0 5-4 7-8 7-3 0-4-1-3-2 3-5-1-9-6-9S3 11 1 14Z" fill="#35c1d8"/><path d="M20 1c6 2 10 7 10 12 0 5-4 7-8 7-3 0-4-1-3-2 3-4 2-9 1-17Z" fill="#5fd64d"/><path d="M1 14c2-4 7-6 12-5-6 3-6 12 1 17 4 2 8 1 12-1C17 35-1 30 1 14Z" fill="#1267c4"/></svg>ra.pdf...</button>
  </div>
  <div class="tray">
    <svg width="18" height="18" viewBox="0 0 18 18"><path d="M2 13 9 5l7 8" fill="none" stroke="#fff" stroke-width="1.300"/></svg>
    <svg width="22" height="16"><use href="#cloud"/></svg>
    <svg width="22" height="16"><use href="#cloud"/></svg>
    <svg width="20" height="16" viewBox="0 0 20 16" fill="none" stroke="#fff" stroke-width="1.200"><path d="M7 4h11v10H6V8M18 7h1.500v4H18M1 2v3h4V2M2 0v2M4 0v2M3 5v5h2"/><path d="M8.500 6h8v6h-8Z" fill="#fff"/></svg>
    <svg width="20" height="18" viewBox="0 0 20 18" fill="none" stroke="#fff" stroke-width="1.200"><path d="M6 2h13v11H4V9M8 17h8M12 13v4M1 1h3v6H1ZM2.500 7v3"/></svg>
    <svg width="20" height="16" viewBox="0 0 20 16" fill="none" stroke="#fff" stroke-width="1.200"><path d="M1 5h3l4-4v14l-4-4H1ZM12 5l6 6M18 5l-6 6"/></svg>
  </div>
  <div class="clock"><span>8:09 AM</span><span>7/14/2025</span></div>
  <button class="note" aria-label="Notifications"><svg width="21" height="20" viewBox="0 0 21 20"><path d="M0 0h21v16h-6v4l-5-4H0Z" fill="#fff"/><path d="M4 4.500h13M4 8h13M4 11.500h8" stroke="#222" stroke-width="1.400"/></svg><span>5</span></button>
</footer>
<div class="peek"><i></i><b>W</b></div>
</div>
</body>
</html>
```
FILE: styles.css
```css
* { box-sizing: border-box; }
html, body { margin: 0; height: 100%; }
body { font-family: "Open Sans", "Noto Sans", sans-serif; font-size: 14px; color: #333; overflow: hidden; background: #f5f5f5; }
button { font: inherit; color: inherit; background: none; border: 0; padding: 0; margin: 0; display: inline-flex; align-items: center; justify-content: center; }
input { font: inherit; color: inherit; border: 0; background: none; outline: 0; padding: 0; min-width: 0; flex: 1; }
input::placeholder { color: #616161; opacity: 1; }
a { color: inherit; text-decoration: none; }
svg { flex: none; display: block; }
.defs { position: absolute; width: 0; height: 0; }

.window { display: flex; flex-direction: column; height: 100vh; position: relative; }

/* Title bar */
.titlebar { flex: none; height: 60px; background: #ebebeb; border-bottom: 1px solid #dedede; display: flex; align-items: center; color: #555; }
.brand { width: 85px; display: flex; justify-content: center; }
.history { margin-left: auto; display: flex; gap: 27px; margin-right: 20px; }
.history .dim { color: #bdbdbd; }
.search { display: flex; align-items: center; height: 40px; background: #fafafa; border: 1px solid #dcdcdc; border-radius: 5px; font-size: 16px; color: #616161; box-shadow: 0 1px 2px rgba(0,0,0,.1); }
.main-search { width: 830px; padding-left: 34px; gap: 22px; }
.account { margin-left: 112px; display: flex; align-items: center; gap: 8px; }
.account button:first-child { margin-right: 20px; }
.org { margin-left: 20px; width: 122px; white-space: nowrap; }
.avatar { position: relative; width: 34px; height: 34px; border-radius: 50%; background: #c9d5ec; color: #26406f; font-weight: 600; font-size: 14px; display: flex; align-items: center; justify-content: center; }
.presence { position: absolute; right: -1px; bottom: -3px; }
.winctl { display: flex; gap: 41px; margin: 0 19px 0 29px; }

.body { flex: 1; display: flex; min-height: 0; }

/* App rail */
.rail { width: 85px; flex: none; background: #ebebeb; display: flex; flex-direction: column; font-size: 12px; color: #616161; box-shadow: inset -1px 0 #e2e2e2; }
.rail a { height: 70px; padding-top: 12px; display: flex; flex-direction: column; align-items: center; gap: 5px; line-height: 16px; white-space: nowrap; position: relative; }
.rail hr { width: 56px; border: 0; border-top: 1px solid #ddd; margin: 4px auto 2px; }
.rail .current { color: #5b5fc7; height: 64px; margin-bottom: 12px; }
.rail .current::before { content: ""; position: absolute; left: 3px; top: 4px; height: 60px; width: 2px; background: #5b5fc7; }
.rail .more { height: 64px; padding-top: 24px; }

/* Document bar */
.app { flex: 1; min-width: 0; display: flex; flex-direction: column; background: #f5f5f5; }
.docbar { flex: none; height: 60px; display: flex; align-items: center; padding-left: 28px; }
h1 { font-size: 17px; font-weight: 400; margin: 0 0 0 30px; color: #242424; white-space: nowrap; width: 252px; }
.saved-ic { margin-left: 12px; }
.saved { margin-left: 6px; width: 40px; }
.doc-menu { margin-left: 53px; }
.tool-search { width: 586px; margin-left: 114px; padding-left: 23px; gap: 12px; font-size: 17px; }

/* Menu row */
.menubar { flex: none; height: 45px; display: flex; align-items: flex-start; padding: 5px 11px 0 26px; }
.menus { display: flex; gap: 27px; font-size: 17px; line-height: 31px; color: #424242; white-space: nowrap; }
.menus a { border-bottom: 3px solid transparent; }
.menus .on { font-weight: 600; color: #222; border-color: #0f7b3f; }
.people { margin-left: auto; display: flex; align-items: center; gap: 15px; height: 31px; }
.face { width: 25px; height: 25px; border-radius: 50%; color: #fff; font-size: 12px; font-weight: 700; display: flex; align-items: center; justify-content: center; }
.pink { background: #e3008c; border: 0; outline: 2px solid #e3008c; outline-offset: 3px; }
.purple { background: #881798; margin-left: 5px; }
.actions { display: flex; gap: 11px; margin-left: 20px; }
.actions button { height: 31px; padding: 0 11px; gap: 5px; background: #fff; border: 1px solid #d1d1d1; border-radius: 4px; color: #242424; white-space: nowrap; }
.actions .share { background: #0f7b3f; color: #fff; border-color: #0f7b3f; }
.actions .close { padding: 0 9px 0 15px; }

/* Ribbon */
.ribbon { flex: none; height: 125px; margin: 0 10px 0 10px; padding: 4px 0 5px; background: #fff; border-radius: 8px; box-shadow: 0 1px 4px rgba(0,0,0,.25); display: flex; color: #333; }
.group { flex: none; border-right: 1px solid #c8c8c8; display: flex; flex-direction: column; }
.gbody { flex: 1; display: flex; }
.glabel { font-size: 12px; line-height: 20px; text-align: center; color: #424242; }
.g-undo { width: 56px; } .g-clip { width: 110px; } .g-font { width: 335px; } .g-align { width: 307px; }
.g-num { width: 206px; } .g-style { width: 237px; } .g-cells { width: 172px; } .g-edit { width: 246px; } .g-add { width: 78px; }
.stack { flex-direction: column; align-items: center; gap: 15px; padding-top: 20px; }
.big { flex-direction: column; justify-content: flex-start; align-items: center; padding-top: 10px; line-height: 20px; white-space: nowrap; }
.big > svg:first-child { margin-bottom: 12px; }
.big > svg:last-child { margin-top: 6px; }
.big span svg { display: inline-block; vertical-align: 0; }
.w90 { width: 90px; } .w72 { width: 72px; } .w54 { width: 54px; } .w50 { width: 50px; } .w60 { width: 60px; }
.bigs { justify-content: center; }
.paste { width: 60px; margin-left: 4px; }
.minis { display: flex; flex-direction: column; gap: 14px; padding: 8px 0 0 9px; }
.rows { flex-direction: column; gap: 7px; padding: 14px 0 0 10px; }
.row { display: flex; align-items: center; height: 30px; }
.combo { position: relative; display: inline-flex; height: 30px; background: #fff; border: 1px solid #c8c8c8; border-radius: 4px; }
.combo select { appearance: none; font: inherit; color: #333; background: none; border: 0; width: 100%; padding: 0 24px 0 5px; outline: 0; }
.combo svg { position: absolute; right: 4px; top: 10px; pointer-events: none; }
.c-font { width: 160px; border-radius: 4px 0 0 4px; }
.c-size { width: 65px; border-radius: 0 4px 4px 0; border-left: 0; margin-right: 10px; }
.c-size select { padding-left: 10px; }
.c-num { width: 160px; }
.c-num select { padding-left: 9px; }
.grow { width: 20px; margin-right: 14px; }
.fmt { font-size: 18px; }
.fmt button { width: 20px; height: 24px; margin: 0 7px; line-height: 24px; }
.fmt .dd { margin: 0 4px 0 3px; }
.fmt .b { font-weight: 800; }
.fmt .i { font-style: italic; font-family: "Liberation Serif", serif; font-size: 20px; }
.fmt .u { text-decoration: underline; text-underline-offset: 3px; }
.fmt .d { text-decoration: underline double; text-underline-offset: 2px; }
.fmt .s { text-decoration: line-through; font-size: 16px; }
.fmt button:nth-of-type(n+6) { margin: 0 5px; }
.fmt .a { font-size: 16px; line-height: 18px; border-bottom: 6px solid #f00; height: 22px; width: 18px; }
.agrid { display: grid; grid-template-columns: 34px 34px 34px; grid-template-rows: 32px 32px 32px; padding-left: 11px; }
.pressed { background: #e6e6e6; border: 1px solid #666; border-radius: 4px; height: 30px; align-self: center; }
.orient-dd { align-self: flex-end; margin-bottom: 10px; }
.arows { margin: 6px 0 4px 10px; border-left: 1px solid #c8c8c8; padding: 13px 0 0 12px; display: flex; flex-direction: column; gap: 17px; align-items: flex-start; }
.arows button { gap: 8px; line-height: 20px; white-space: nowrap; }
.nums button { width: 20px; }
.nums .cur { font-size: 16px; margin-left: 7px; }
.nums .dd { margin: 0 10px 0 8px; }
.nums button + button { margin-left: 16px; }
.g-style .gbody { gap: 2px; }
.erows { width: 130px; padding: 9px 0 0 17px; display: flex; flex-direction: column; gap: 13px; align-items: flex-start; }
.erows button { gap: 9px; line-height: 20px; }
.expand { flex: 1; align-self: flex-end; padding: 0 0 4px 30px; color: #333; }

/* Formula bar */
.fbar { flex: none; display: flex; gap: 11px; padding: 5px 11px 0 10px; height: 40px; }
.c-name { width: 154px; border-color: #d1d1d1; }
.c-name select { font-size: 15px; }
.c-name svg { top: 8px; right: 2px; }
.fx { width: 107px; height: 30px; background: #fff; border: 1px solid #d1d1d1; border-radius: 4px; display: flex; align-items: center; padding: 0 4px 0 8px; gap: 15px; }
.fx button { font-family: "Liberation Serif", serif; font-size: 18px; }
.fx .dimdd { color: #aaa; margin-left: -13px; }
.fx sub { font-size: 14px; }
.formula { flex: 1; height: 30px; background: #fff; border: 1px solid #d1d1d1; border-radius: 4px; display: flex; align-items: center; padding-right: 10px; }

/* Sheet grid */
.sheet { flex: 1; min-height: 0; display: flex; }
.view { flex: 1; min-width: 0; overflow: hidden; }
table { table-layout: fixed; border-collapse: separate; border-spacing: 0; width: 1882px; font-family: Lato, sans-serif; font-size: 15px; color: #000; }
.c0 { width: 54px; } .cK { width: 113px; } .cL { width: 485px; } .cM { width: 56px; } .cN { width: 35px; } .cO { width: 80px; } .cP { width: 88px; }
.cQ { width: 95px; } .cR { width: 110px; } .cS { width: 175px; } .cT { width: 116px; } .cU { width: 344px; } .cV { width: 131px; }
td, th { padding: 0 3px; height: 25px; line-height: 20px; white-space: nowrap; overflow: hidden; vertical-align: bottom; }
td { background: #fff; border-right: 1px solid #dcdcdc; border-bottom: 1px solid #d8d8d8; }
td:nth-child(2) { font-size: 14px; }
td:last-child { padding-left: 4px; }
tbody th, .names .n { background: #f5f5f5; color: #616161; font: 400 16px/22px "Open Sans", sans-serif; text-align: right; padding: 0 6px 0 0; border-right: 1px solid #a6a6a6; border-bottom: 1px solid #dcdcdc; }
.letters th { height: 37px; font: 400 16px/22px "Open Sans", sans-serif; color: #616161; background: linear-gradient(#d4d4d4, #d4d4d4) right bottom / 1px 23px no-repeat; border-bottom: 1px solid #bdbdbd; }
.letters .corner { border-right: 3px solid #b0b0b0; padding: 0 2px 4px 0; }
.corner svg { margin-left: auto; }
.letters .sel { color: #107c41; background: linear-gradient(#caead8, #caead8) bottom / 100% 22px no-repeat; border-bottom: 2px solid #107c41; line-height: 21px; }
.names th { background: #ddebf7; font-weight: 700; text-align: center; border-bottom: 2px solid #8b8f96; padding: 0; }
.names .n { background: #f5f5f5; font-weight: 400; text-align: right; border-bottom: 2px solid #8b8f96; padding-right: 6px; line-height: 20px; }
.clip { display: flex; justify-content: center; overflow: hidden; }
.h26 > * { height: 26px; } .h23 > * { height: 23px; } .h24 > * { height: 24px; }
.m { text-align: right; padding: 0 7px; }
.m span { float: left; }
.dash { padding-right: 14px; }
.red td { color: #e8101c; }
.green td { background: #00b050; border-color: #00b050; color: #05330f; }
.green th { background: #caead8; color: #107c41; }
td.active { position: relative; overflow: visible; }
.active i { position: absolute; inset: -2px -1px -1px -2px; border: 2px solid #217346; box-shadow: inset 0 0 0 1px #fff; }
.active i::after { content: ""; position: absolute; right: -4px; bottom: -4px; width: 7px; height: 7px; background: #217346; border: 1px solid #fff; }
.vscroll { width: 15px; background: #e6e6e6; display: flex; flex-direction: column; align-items: center; padding: 5px 0; }
.vscroll span { width: 9px; height: 56px; margin: 9px 0 auto; border-radius: 5px; background: #8a8a8a; }
.hscroll { flex: none; height: 15px; background: #e6e6e6; display: flex; align-items: center; padding: 0 20px 0 5px; }
.hscroll div { flex: 1; padding: 0 49% 0 22%; }
.hscroll span { display: block; height: 9px; border-radius: 5px; background: #8a8a8a; }

/* Sheet tabs */
.tabs { flex: none; height: 41px; border-bottom: 1px solid #dcdcdc; display: flex; gap: 29px; font-size: 16px; color: #505050; padding: 0 0 0 15px; white-space: nowrap; }
.tabs a { line-height: 38px; border-bottom: 3px solid transparent; height: 40px; }
.tabs .on { font-weight: 700; border-color: #1e7145; }
.step { color: #aaa; height: 38px; }
.tabs .all { margin: 0 -6px 0 -1px; }
.tabs a + .step { color: #444; margin-left: -3px; }

/* Status bar */
.status { flex: none; height: 27px; background: #fdfdfd; display: flex; align-items: center; padding: 3px 28px 0 25px; color: #616161; }
.sicons { margin-left: auto; display: flex; align-items: center; gap: 24px; }
.more-status { margin-right: -5px; }

/* Taskbar */
.taskbar { flex: none; height: 50px; background: #1c1c1c; display: flex; align-items: center; color: #fff; }
.start { width: 60px; height: 50px; }
.tsearch { width: 360px; height: 50px; background: #f0f0f0; border: 1px solid #cfcfcf; color: #333; display: flex; align-items: center; padding-left: 15px; gap: 14px; font-size: 18px; }
.tsearch input::placeholder { color: #333; }
.tv { margin: 0 34px 0 20px; }
.ex { margin-right: 18px; }
.tasks { display: flex; gap: 10px; height: 50px; }
.tasks button { width: 89px; justify-content: flex-start; padding: 2px 0 0 3px; gap: 5px; border-bottom: 4px solid #83b9e6; white-space: nowrap; }
.tasks .on { background: #4a4a4a; width: 99px; margin: 0 -5px; padding-left: 8px; }
.zoom { width: 30px; height: 30px; border-radius: 50%; background: #0b5cff; font-size: 9px; font-weight: 700; display: flex; align-items: center; justify-content: center; }
.tray { margin-left: auto; display: flex; gap: 19px; align-items: center; }
.clock { display: flex; flex-direction: column; align-items: center; line-height: 22px; margin: 0 23px 0 20px; }
.note { position: relative; margin-right: 31px; }
.note span { position: absolute; left: 9px; top: 9px; width: 20px; height: 20px; line-height: 19px; border-radius: 50%; background: #3b3b3b; border: 1px solid #888; font-size: 12px; font-weight: 700; }

/* Window peeking in at the corner */
.peek { position: absolute; right: 0; bottom: 0; width: 30px; height: 74px; overflow: hidden; }
.peek i { display: block; height: 24px; background: #555; }
.peek b { position: absolute; right: 0; bottom: 0; width: 25px; height: 36px; background: #3f8f94; color: #cfe3e4; font-size: 16px; line-height: 36px; padding-left: 11px; overflow: hidden; }
```
